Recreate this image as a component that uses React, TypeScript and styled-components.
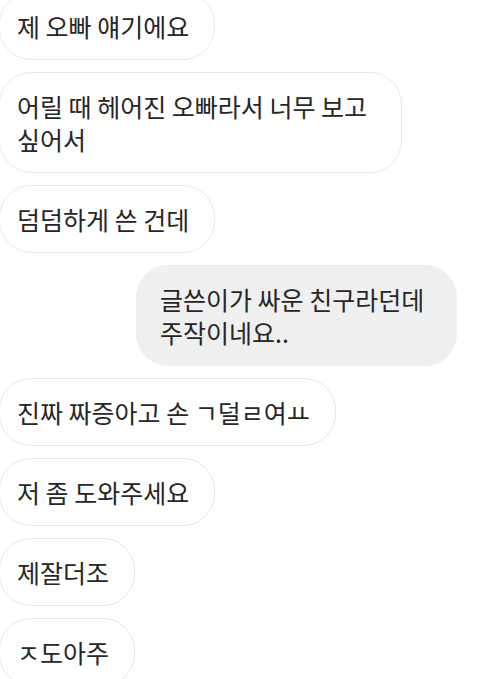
import React from 'react';
import styled, {createGlobalStyle} from 'styled-components';

const GlobalStyle = createGlobalStyle`
  html, body {
    margin: 0;
    padding: 0;
    background: #fff;
    overflow: hidden;
  }
  body {
    font-family: "Noto Sans CJK KR", "Noto Sans", sans-serif;
  }
`;

const Thread = styled.div`
  display: flex;
  flex-direction: column;
  gap: 12px;
  margin-top: -8px;
  width: 480px;
`;

const Row = styled.div<{ $mine?: boolean }>`
  display: flex;
  justify-content: ${p => (p.$mine ? 'flex-end' : 'flex-start')};
  padding-right: ${p => (p.$mine ? '23px' : '0')};
  margin-left: ${p => (p.$mine ? '0' : '-1px')};
`;

const Bubble = styled.div<{ $mine?: boolean; $width?: number }>`
  box-sizing: border-box;
  width: ${p => (p.$width ? `${p.$width}px` : 'auto')};
  padding: 16.5px 25px 16.5px ${p => (p.$mine ? '23px' : '17px')};
  border-radius: 32px;
  background: ${p => (p.$mine ? '#efefef' : '#fff')};
  border: 1px solid ${p => (p.$mine ? '#efefef' : '#e8e8e8')};
  color: #262626;
  font-size: 25px;
  line-height: 33px;
  white-space: nowrap;
`;

type Message = { text: string[]; mine?: boolean; width?: number };

const messages: Message[] = [
  {text: ['제 오빠 얘기에요']},
  {text: ['어릴 때 헤어진 오빠라서 너무 보고', '싶어서'], width: 403},
  {text: ['덤덤하게 쓴 건데']},
  {text: ['글쓴이가 싸운 친구라던데', '주작이네요..'], mine: true, width: 321},
  {text: ['진짜 짜증아고 손 ㄱ덜ㄹ여ㅛ']},
  {text: ['저 좀 도와주세요']},
  {text: ['제잘더조']},
  {text: ['ㅈ도아주']},
];

const App = () => {
  return (
    <>
      <GlobalStyle/>
      <Thread>
        {messages.map((m, i) => (
          <Row key={i} $mine={m.mine}>
            <Bubble $mine={m.mine} $width={m.width}>
              {m.text.map((line, j) => (
                <React.Fragment key={j}>
                  {j > 0 && <br/>}
                  {line}
                </React.Fragment>
              ))}
            </Bubble>
          </Row>
        ))}
      </Thread>
    </>
  );
};

export default App;
